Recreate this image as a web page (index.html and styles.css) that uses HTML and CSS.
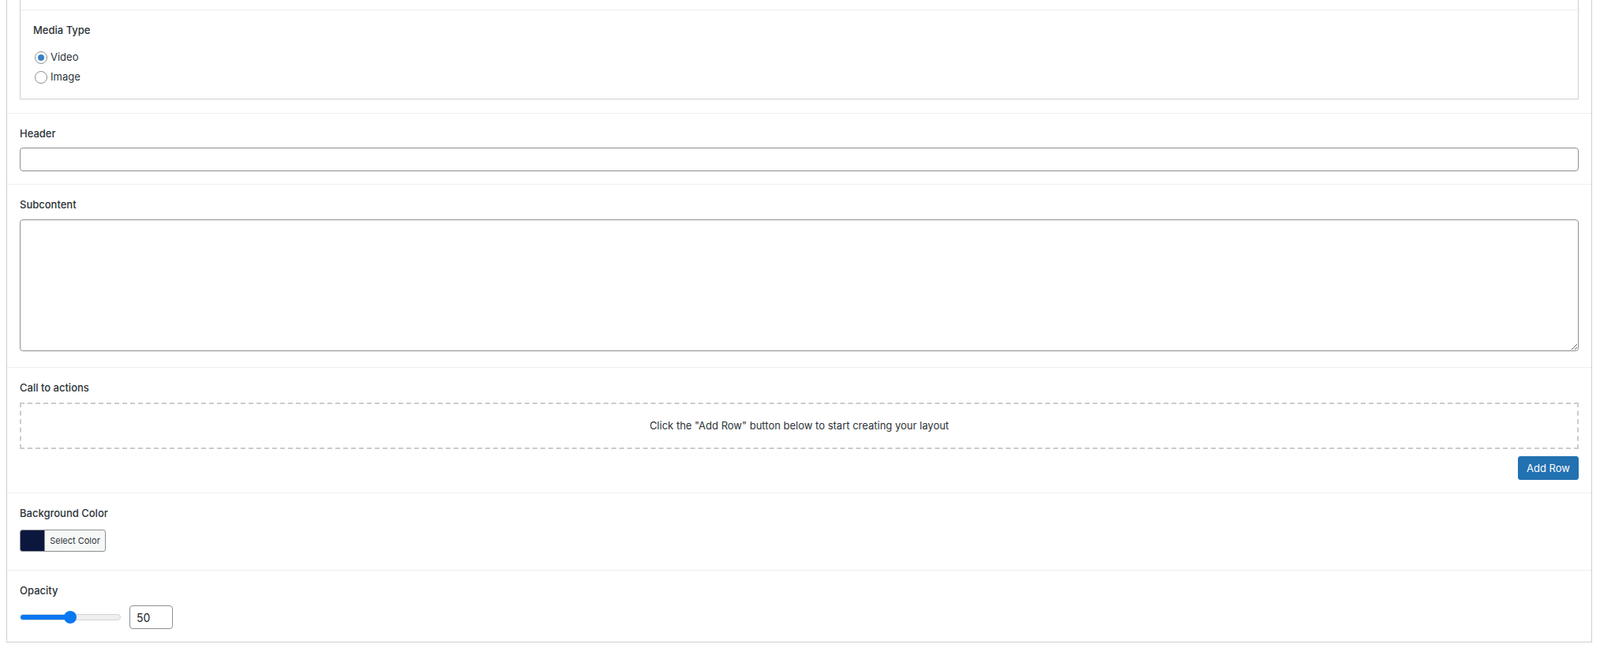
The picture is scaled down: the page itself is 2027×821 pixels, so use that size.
FILE: index.html
```html
<!DOCTYPE html>
<html lang="en">
<head>
<meta charset="utf-8">
<title>Fields</title>
<link rel="stylesheet" href="styles.css">
</head>
<body>
<div class="panel">
  <div class="field field-group">
    <div class="subfields">
      <div class="subfield-prev"></div>
      <div class="subfield">
        <div class="label label-radio">Media Type</div>
        <ul class="radio-list">
          <li><label><span class="radio checked"></span>Video</label></li>
          <li><label><span class="radio"></span>Image</label></li>
        </ul>
      </div>
    </div>
  </div>

  <div class="field field-header">
    <div class="label label-tight">Header</div>
    <input class="text-input" type="text">
  </div>

  <div class="field field-sub">
    <div class="label">Subcontent</div>
    <textarea class="textarea"></textarea>
  </div>

  <div class="field field-cta">
    <div class="label">Call to actions</div>
    <div class="empty-msg">Click the "Add Row" button below to start creating your layout</div>
    <div class="actions"><button class="btn-primary" type="button">Add Row</button></div>
  </div>

  <div class="field field-bg">
    <div class="label label-color">Background Color</div>
    <button class="color-btn" type="button"><span class="swatch"></span><span class="color-text">Select Color</span></button>
  </div>

  <div class="field field-opacity">
    <div class="label">Opacity</div>
    <div class="range-row">
      <input class="range" type="range" min="0" max="100" value="50" style="--fill:50%">
      <input class="num-input" type="text" value="50">
    </div>
  </div>
</div>
</body>
</html>
```

FILE: styles.css
```css
* { box-sizing: border-box; }

body {
  margin: 0;
  background: #ffffff;
  font-family: "Inter", "Liberation Sans", sans-serif;
  font-size: 13px;
  color: #1d2327;
}

.panel {
  margin: 0 10px 8px 8px;
  border: 1px solid #ccd0d4;
  border-top: none;
  background: #fff;
}

.field {
  padding: 15px 16px;
  border-top: 1px solid #eeeeee;
}

.field-group {
  border-top: none;
  padding-top: 0;
  padding-bottom: 17px;
}

.subfields {
  border: 1px solid #ccd0d4;
  border-top: none;
}

.subfield-prev { height: 12px; }

.subfield {
  border-top: 1px solid #eeeeee;
  padding: 15px 16px;
}

.label {
  font-size: 13px;
  font-weight: 500;
  line-height: 20px;
  margin-bottom: 9px;
  color: #2c3338;
}

.label-radio { margin-bottom: 12px; }
.label-tight { margin-bottom: 8px; }
.label-color { margin-bottom: 11px; }

.radio-list {
  list-style: none;
  margin: 0;
  padding: 0;
}

.radio-list li {
  height: 25px;
  line-height: 25px;
}

.radio-list label {
  display: flex;
  align-items: center;
  font-size: 13px;
  color: #2c3338;
}

.radio {
  width: 16px;
  height: 16px;
  border: 1px solid #8c8f94;
  border-radius: 50%;
  margin: 0 4px 0 2px;
  display: flex;
  align-items: center;
  justify-content: center;
  background: #fff;
}

.radio.checked::after {
  content: "";
  width: 8px;
  height: 8px;
  border-radius: 50%;
  background: #3582c4;
}

.field-header { padding-bottom: 16px; }

.text-input {
  display: block;
  width: 100%;
  height: 30px;
  border: 1px solid #8c8f94;
  border-radius: 4px;
  background: #fff;
  margin: 0;
  padding: 0 8px;
}

.field-sub { padding-bottom: 20px; }

.textarea {
  display: block;
  width: 100%;
  height: 167px;
  border: 1px solid #8c8f94;
  border-radius: 4px;
  background: #fff;
  margin: 0;
  resize: vertical;
}

.field-cta { padding-bottom: 16px; }

.empty-msg {
  border: 2px dashed #cccccc;
  padding: 19px;
  text-align: center;
  font-size: 13px;
  line-height: 17px;
  color: #2c3338;
}

.actions {
  display: flex;
  justify-content: flex-end;
  margin-top: 9px;
}

.btn-primary {
  height: 30px;
  min-width: 75px;
  padding: 0 10px;
  border: 1px solid #2271b1;
  border-radius: 3px;
  background: #2271b1;
  color: #fff;
  font-family: inherit;
  font-size: 13px;
  line-height: 28px;
  white-space: nowrap;
  cursor: pointer;
}

.field-bg { padding-bottom: 23px; }

.color-btn {
  display: flex;
  align-items: stretch;
  height: 28px;
  width: 109px;
  padding: 0;
  border: 1px solid #8c8f94;
  border-radius: 3px;
  background: #f6f7f7;
  overflow: hidden;
  font-family: inherit;
  cursor: pointer;
}

.swatch {
  width: 30px;
  background: #0c173d;
  flex: none;
}

.color-text {
  flex: 1;
  font-size: 11px;
  line-height: 26px;
  color: #2c3338;
  text-align: center;
  border-left: 1px solid #8c8f94;
}

.field-opacity { padding-bottom: 16px; }

.range-row {
  display: flex;
  align-items: center;
  gap: 11px;
  height: 30px;
}

.range {
  -webkit-appearance: none;
  appearance: none;
  width: 128px;
  height: 8px;
  margin: 0;
  border-radius: 4px;
  border: 1px solid #d3d3d3;
  background: linear-gradient(to right, #0a78f2 0, #0a78f2 var(--fill), #efefef var(--fill), #efefef 100%);
  outline: none;
}

.range::-webkit-slider-thumb {
  -webkit-appearance: none;
  appearance: none;
  width: 16px;
  height: 16px;
  border-radius: 50%;
  background: #0a78f2;
  border: none;
}

.num-input {
  width: 55px;
  height: 30px;
  border: 1px solid #8c8f94;
  border-radius: 4px;
  padding: 0 8px;
  font-family: inherit;
  font-size: 14px;
  color: #1d2327;
  background: #fff;
  margin: 0;
}
```
